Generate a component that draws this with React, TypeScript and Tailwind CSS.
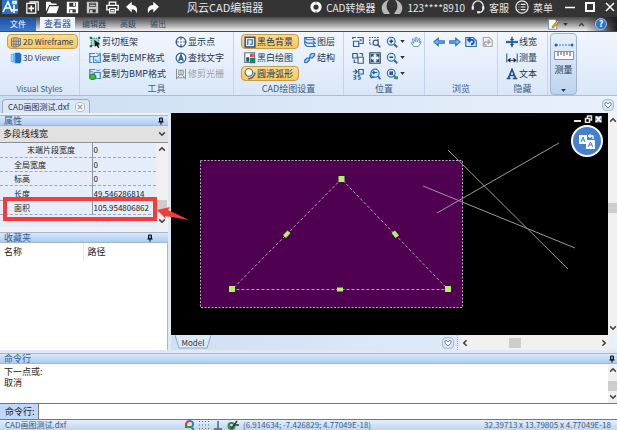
import { ReactNode, useState } from "react";

const SvgIcon = ({
  children,
  size = "w-3 h-3",
}: {
  children: ReactNode;
  size?: string;
}) => (
  <svg
    viewBox="0 0 16 16"
    className={`${size} shrink-0`}
    fill="none"
    stroke="#2f66a8"
    strokeWidth="1.6"
    aria-hidden="true"
  >
    {children}
  </svg>
);

const Caret = ({ color = "#333" }: { color?: string }) => (
  <svg viewBox="0 0 6 4" className="w-[5px] h-[3px] shrink-0" aria-hidden="true">
    <path d="M0 0h6L3 4z" fill={color} />
  </svg>
);

const Chevron = ({ d, size = "w-2 h-2" }: { d: string; size?: string }) => (
  <svg
    viewBox="0 0 10 10"
    className={`${size} shrink-0`}
    fill="none"
    stroke="#444"
    strokeWidth="2"
    aria-hidden="true"
  >
    <path d={d} />
  </svg>
);

const UP = "M1.5 7L5 3.5 8.5 7";
const DOWN = "M1.5 3L5 6.5 8.5 3";
const LEFT = "M7 1.5L3.5 5 7 8.5";
const RIGHT = "M3 1.5L6.5 5 3 8.5";

const Pin = () => (
  <svg viewBox="0 0 8 10" className="w-[6px] h-2 shrink-0" aria-hidden="true">
    <path d="M2 1h4v5H2z" fill="#7c93b5" stroke="#111" strokeWidth="1.3" />
    <path d="M0.5 6.2h7M4 6v4" stroke="#111" strokeWidth="1.4" />
  </svg>
);

const icons = {
  wireframe: (
    <SvgIcon>
      <path
        d="M2 3.5C2 2 11 2 11 3.5v10c0 1.5-9 1.5-9 0zM5 2.5v12M8 2.5v12M2 7h12M2 11h12M11 4l3-1v9l-3 2"
        stroke="#5b7396"
        strokeWidth="1.2"
      />
    </SvgIcon>
  ),
  viewer: (
    <SvgIcon>
      <path d="M1 3l7-2v14l-7-2z" fill="#67b4f2" stroke="none" />
      <path d="M7 1h6l2 2v10l-2 2H7z" fill="#1770cf" stroke="none" />
      <path d="M3 4v8" stroke="#b8e0ff" />
    </SvgIcon>
  ),
  crop: (
    <SvgIcon>
      <path d="M3 3h10v10H3z" fill="#a9d6c9" stroke="#3c8d7c" strokeDasharray="2 1" />
      <path
        d="M1 1h3v3H1zM12 1h3v3h-3zM1 12h3v3H1z"
        fill="#1d5d9c"
        stroke="none"
      />
      <path d="M7 5l8 6-3.5.5L14 15l-2 1-1.5-3.5L8 14z" fill="#111" stroke="none" />
    </SvgIcon>
  ),
  emf: (
    <SvgIcon>
      <path d="M8 2H1v12h3M1 6h4" stroke="#3f86cd" />
      <path d="M6 6h5l4-3v11H6z" fill="#dcecff" stroke="#3f86cd" />
      <path d="M9 1l3 2 3-2M9 9v3h4" stroke="#3f86cd" strokeWidth="1.2" />
    </SvgIcon>
  ),
  bmp: (
    <SvgIcon>
      <path d="M1 8V2h7M1 5h4" stroke="#3f86cd" />
      <path d="M7 6h8v8H7z" fill="#dcecff" stroke="#3f86cd" />
      <path d="M9 2l3 2 3-2" stroke="#3f86cd" strokeWidth="1.2" />
      <path d="M1 9l4-1 4 2v4l-4 2-4-2z" fill="#41b649" stroke="#278c36" />
    </SvgIcon>
  ),
  target: (
    <SvgIcon>
      <circle cx="8" cy="8" r="6.5" fill="#eef6ff" stroke="#34597f" />
      <path d="M8 1v4M8 11v4M1 8h4M11 8h4" stroke="#34597f" />
      <circle cx="8" cy="8" r="1" fill="#34597f" stroke="none" />
    </SvgIcon>
  ),
  findText: (
    <SvgIcon>
      <circle cx="8" cy="8" r="6.5" fill="#fff" stroke="#34597f" />
      <path d="M5 12l3-8 3 8M6 9.5h4" stroke="#1a61b8" strokeWidth="2" />
    </SvgIcon>
  ),
  trim: (
    <SvgIcon>
      <path
        d="M2 1v14M14 1v14M2 13h12M5 3h6v6H5zM3 13l3-3M13 13l-3-3M8 3v6"
        stroke="#8e8e8e"
        strokeWidth="1.3"
      />
    </SvgIcon>
  ),
  blackBg: (
    <SvgIcon>
      <path d="M1.5 1.5h13v13h-13z" fill="#dfebfa" stroke="#2c5279" strokeWidth="2" />
      <path d="M5 12V5h6v6H8" stroke="#42709e" />
    </SvgIcon>
  ),
  monoDraw: (
    <SvgIcon>
      <path d="M1 1h13v13H1z" fill="#fff" stroke="#5c7898" />
      <path d="M3 7h4v6H3z" fill="#33485e" stroke="none" />
      <path d="M8 2h5v5H8z" fill="#e0484a" stroke="none" />
      <path d="M8 8h7v7H8z" fill="#16846f" stroke="none" />
    </SvgIcon>
  ),
  smoothArc: (
    <SvgIcon>
      <circle cx="6.5" cy="6" r="5" fill="#fff" stroke="#42617f" strokeWidth="1.4" />
      <path d="M14.5 6c0 5-4 8.5-9 8.5" stroke="#42617f" strokeWidth="1.8" />
    </SvgIcon>
  ),
  layers: (
    <SvgIcon>
      <path
        d="M1 2h11l3 3H4zM1 6.5l3 3h11l-3-3M1 11l3 3h11l-3-3M1 2v9"
        fill="#e3f0ff"
        stroke="#2d70bd"
      />
    </SvgIcon>
  ),
  structure: (
    <SvgIcon>
      <path d="M4 12l7-8" strokeWidth="2" />
      <path d="M8 4l2-2h4v3l-3 3H8zM1 11l3-3h3v3l-3 3H1z" fill="#a9cff7" stroke="#2b6fc2" />
    </SvgIcon>
  ),
  posA: (
    <SvgIcon>
      <path d="M7 2h8v8h-5M2 7h7v7H2z" fill="#e7f2ff" stroke="#335f93" />
      <path d="M1 4V2h4M10 5h2v2" stroke="#335f93" />
    </SvgIcon>
  ),
  zoomWindow: (
    <SvgIcon>
      <path d="M1 10V2h11v4M1 11h4" strokeDasharray="2 1.5" stroke="#365a80" />
      <circle cx="9" cy="9" r="3.5" fill="#e8f5ff" stroke="#365a80" />
      <path d="M11.5 11.5L15 15" stroke="#365a80" strokeWidth="2.2" />
    </SvgIcon>
  ),
  zoomIn: (
    <SvgIcon>
      <circle cx="7" cy="7" r="5.2" fill="#dff0ff" stroke="#4275ab" />
      <path d="M4.5 7h5M7 4.5v5" stroke="#164c92" strokeWidth="2" />
      <path d="M11 11l4 4" strokeWidth="2.5" />
    </SvgIcon>
  ),
  zoomOut: (
    <SvgIcon>
      <circle cx="7" cy="7" r="5.2" fill="#dff0ff" stroke="#4275ab" />
      <path d="M4.5 7h5" stroke="#164c92" strokeWidth="2" />
      <path d="M11 11l4 4" strokeWidth="2.5" />
    </SvgIcon>
  ),
  zoomAll: (
    <SvgIcon>
      <circle cx="7" cy="7" r="5.2" fill="#dff0ff" stroke="#4275ab" />
      <path d="M4.5 4.5h5v5h-5z" fill="#3c5f86" stroke="none" />
      <path d="M10 10l4 4" strokeWidth="2.5" />
      <path d="M11 11h5v4h-5z" fill="#2fa04a" stroke="none" />
    </SvgIcon>
  ),
  hand: (
    <SvgIcon>
      <path
        d="M5 14L1.5 9 3 8l2 2-2-6 1.5-.5L7 8V2l2-.5L9.5 8 12 3l1.5 1L12 9l2.5-2v2.5L11 14z"
        fill="#fff"
        stroke="#5d93d0"
        strokeWidth="1.3"
      />
    </SvgIcon>
  ),
  posB: (
    <SvgIcon>
      <path d="M1 2h6v6H1zM10 2h4v4M3 10v4h3" fill="#e7f2ff" stroke="#335f93" />
      <path d="M8 7h7v8H8z" fill="#fff" stroke="#335f93" />
    </SvgIcon>
  ),
  fit: (
    <SvgIcon>
      <path d="M1 1h14v14H1z" fill="#e7f2ff" stroke="#2f4d6d" />
      <path
        d="M3 7V3h4M9 3h4v4M13 9v4H9M7 13H3V9M3 3l3 3M13 3l-3 3M13 13l-3-3M3 13l3-3"
        stroke="#2f4d6d"
      />
    </SvgIcon>
  ),
  rotate35: (
    <SvgIcon>
      <path d="M1 5h5M4 2l3 3-3 3M9 2h6v6H9z" stroke="#335f93" />
      <path d="M2 10h3v5H2M2 12.5h3M11 10H8v2h3v3H8" stroke="#1767c5" strokeWidth="1.3" />
    </SvgIcon>
  ),
  zoomPrev: (
    <SvgIcon>
      <circle cx="8" cy="7" r="5.5" fill="#c9e4ff" stroke="#2878cb" />
      <path d="M11 6H5m2-2L5 6l2 2M1 9l2 4 4-1" stroke="#1a5caa" />
      <path d="M12 11l3 4" strokeWidth="2.5" />
    </SvgIcon>
  ),
  back: (
    <SvgIcon>
      <path d="M1 8l6-5v3.5h8v3H7V13z" fill="#7db8f0" stroke="#2f78c8" strokeWidth="1.5" />
    </SvgIcon>
  ),
  forward: (
    <SvgIcon>
      <path d="M15 8L9 3v3.5H1v3h8V13z" fill="#7db8f0" stroke="#2f78c8" strokeWidth="1.5" />
    </SvgIcon>
  ),
  pageBack: (
    <SvgIcon>
      <path d="M1 2h10l4 4v8H1z" fill="#d7eaff" stroke="#356eae" />
      <path d="M4 5h4c6 0 4 6 0 6M7 2L4 5l3 3" stroke="#0e5ac0" strokeWidth="2.4" />
    </SvgIcon>
  ),
  pageForward: (
    <SvgIcon>
      <path d="M3 2h8l4 4v8H3z" fill="#f2f2f2" stroke="#aaa" />
      <path d="M12 8H7c-5 0-3 5 1 4M9 5l3 3-3 3" stroke="#aaa" strokeWidth="1.8" />
    </SvgIcon>
  ),
  lineWidth: (
    <SvgIcon>
      <path d="M0 8h16" stroke="#2465b4" strokeWidth="3" />
      <path d="M8 1v4M8 11v4M6 4l2 2 2-2M6 12l2-2 2 2" stroke="#1c4473" />
    </SvgIcon>
  ),
  measure: (
    <SvgIcon>
      <path d="M1 2v12M15 2v12" stroke="#3a6ea8" />
      <path d="M3 11h10M6 8.5L3 11l3 2.5M10 8.5l3 2.5-3 2.5" stroke="#222" />
    </SvgIcon>
  ),
  text: (
    <SvgIcon>
      <path d="M1 14h5M9 14h6M3 14L8 2l5 12M5 10h6" stroke="#1c4c91" strokeWidth="2.2" />
    </SvgIcon>
  ),
};

type ToolProps = {
  icon: ReactNode;
  label: string;
  active?: boolean;
  disabled?: boolean;
  width?: string;
};

const Tool = ({ icon, label, active, disabled, width = "" }: ToolProps) => (
  <button
    type="button"
    disabled={disabled}
    className={`flex items-center gap-px h-[15px] pl-0.5 pr-1 rounded-sm border whitespace-nowrap ${width} ${
      active
        ? "border-[#c59b4c] bg-linear-to-b from-[#fbdc93] to-[#fbc654]"
        : "border-transparent"
    } ${disabled ? "text-gray-400" : "text-[#24364f]"}`}
  >
    {icon}
    {label}
  </button>
);

const IconTool = ({
  icon,
  label,
  menu,
}: {
  icon: ReactNode;
  label: string;
  menu?: boolean;
}) => (
  <button type="button" aria-label={label} className="flex items-center gap-0.5 h-[15px]">
    {icon}
    {menu && <Caret />}
  </button>
);

const Group = ({
  title,
  width,
  children,
}: {
  title: string;
  width: string;
  children: ReactNode;
}) => (
  <section
    className={`flex flex-col justify-between shrink-0 pt-0.5 border-r border-[#c3d5ea] ${width}`}
  >
    {children}
    <h2 className="text-center leading-3 text-[#3d5a82]">{title}</h2>
  </section>
);

const PanelHeader = ({
  title,
  pinClass = "mr-1",
}: {
  title: string;
  pinClass?: string;
}) => (
  <div className="flex items-center justify-between h-[11px] shrink-0 pl-1 border-y border-[#a5b7cc] bg-linear-to-b from-[#d7e8fb] to-[#abccf3] text-[9px] leading-[9px] text-[#315d9b]">
    <span>{title}</span>
    <button type="button" aria-label={`${title} 固定`} className={pinClass}>
      <Pin />
    </button>
  </div>
);

const quickActions = [
  {
    label: "新建",
    path: (
      <>
        <path d="M1 3h11v12H1zM4 1h11v11" strokeWidth="1.5" />
        <path d="M6.5 5.5v7M3 9h7" strokeWidth="2" />
      </>
    ),
  },
  {
    label: "打开",
    path: <path d="M0 1h5l2 2h6v2H4l-4 8zM4.5 6.5H16L13 15H1z" fill="#fff" stroke="none" />,
  },
  {
    label: "保存",
    path: (
      <path
        fillRule="evenodd"
        d="M1 1h14v14H1zM4 2v5h8V2zM4 10v4h8v-4zM9 2.5h2V6H9zM5 11h3v3H5z"
        fill="#fff"
        stroke="none"
      />
    ),
  },
  {
    label: "另存为",
    path: (
      <path
        fillRule="evenodd"
        d="M1 1h14v14H1zM4 2v5h8V2zM4 10v4h8v-4zM5 3h6v1H5zM5 5h6v1H5zM5 11h3v3H5z"
        fill="#c8c8c8"
        stroke="none"
      />
    ),
  },
  {
    label: "打印",
    path: (
      <>
        <path d="M4 5V1.5h8V5M4 11H1V5.5h14V11h-3" />
        <path d="M4.5 9h7v5.5h-7zM6 12h4" />
      </>
    ),
  },
  {
    label: "撤销",
    path: <path d="M0 7l7-6v4c6 0 8 5 6 10-1-4-3-5-6-5v4z" fill="#fff" stroke="none" />,
  },
  {
    label: "重做",
    path: <path d="M16 7L9 1v4C3 5 1 10 3 15c1-4 3-5 6-5v4z" fill="#fff" stroke="none" />,
  },
];

const TitleBar = () => (
  <header className="flex items-center justify-between h-[17px] shrink-0 pr-0.5 pb-[3px] bg-[#343434] text-[10px] text-gray-200 whitespace-nowrap">
    <div className="flex items-center pl-0.5">
      <svg viewBox="0 0 16 14" className="w-4 h-[14px] mr-2" aria-hidden="true">
        <rect width="16" height="14" fill="#2672c4" />
        <path
          d="M1 12L6 2l4 10M3 8h6M12 5v8M9 10h7M11 1.5h3v2h-3z"
          stroke="#fff"
          strokeWidth="1.6"
          fill="none"
        />
      </svg>
      <div className="flex items-center gap-[7px]">
        {quickActions.map((item) => (
          <button key={item.label} type="button" aria-label={item.label}>
            <svg
              viewBox="0 0 16 16"
              className="w-[13px] h-[13px]"
              fill="none"
              stroke="#fff"
              strokeWidth="1.6"
              aria-hidden="true"
            >
              {item.path}
            </svg>
          </button>
        ))}
      </div>
      <h1 className="ml-7 text-[11px]">风云CAD编辑器</h1>
    </div>
    <div className="flex items-center">
      <button type="button" className="flex items-center gap-1 mr-1.5">
        <svg viewBox="0 0 16 16" className="w-3 h-3" aria-hidden="true">
          <circle cx="8" cy="8" r="5.5" fill="none" stroke="#fff" strokeWidth="4" />
          <path d="M8 0v3M8 13v3" stroke="#343434" />
        </svg>
        CAD转换器
      </button>
      <button type="button" className="flex items-center gap-1 mr-1.5">
        <svg viewBox="0 0 22 14" className="w-[22px] h-[14px]" aria-hidden="true">
          <path
            d="M7 0C0 3-1 9 3 14h6L6 9C5 5 6 2 8 0zM15 0c7 3 8 9 4 14h-6l3-5c1-4 0-7-2-9z"
            fill="#b9b9b9"
          />
        </svg>
        123****8910
      </button>
      <button type="button" className="flex items-center gap-1 mr-1.5">
        <svg
          viewBox="0 0 16 16"
          className="w-[14px] h-[14px]"
          fill="none"
          stroke="#eee"
          strokeWidth="1.5"
          aria-hidden="true"
        >
          <path d="M2 9V7a6 6 0 0112 0v2c0 4-2 5-5 5" />
          <path d="M2 7v4M14 7v4" strokeWidth="2.5" />
          <path d="M7 14h3" strokeWidth="2.5" />
        </svg>
        客服
      </button>
      <button type="button" className="flex items-center gap-1 mr-3">
        <svg
          viewBox="0 0 16 16"
          className="w-[14px] h-[14px]"
          fill="none"
          stroke="#eee"
          strokeWidth="1.4"
          aria-hidden="true"
        >
          <circle cx="8" cy="8" r="7" />
          <path d="M4 5h1M6.5 5H12M4 8h1M6.5 8H12M4 11h1M6.5 11H12" />
        </svg>
        菜单
      </button>
      <div className="flex items-center gap-2.5">
        <button type="button" aria-label="最小化">
          <svg viewBox="0 0 10 10" className="w-2.5 h-2.5" aria-hidden="true">
            <path d="M0 5.5h10" stroke="#fff" strokeWidth="1.5" />
          </svg>
        </button>
        <button type="button" aria-label="最大化">
          <svg viewBox="0 0 10 10" className="w-2.5 h-2.5" aria-hidden="true">
            <path d="M1 1h8v8H1z" fill="none" stroke="#fff" strokeWidth="2" />
          </svg>
        </button>
        <button type="button" aria-label="关闭">
          <svg viewBox="0 0 10 10" className="w-2.5 h-2.5" aria-hidden="true">
            <path d="M1 1l8 8M9 1L1 9" stroke="#fff" strokeWidth="1.5" />
          </svg>
        </button>
      </div>
    </div>
  </header>
);

const tabs = ["查看器", "编辑器", "高级", "输出"];

const TabRow = () => {
  const [tab, setTab] = useState<string>("查看器");

  return (
    <nav className="flex items-stretch h-[15px] shrink-0 bg-linear-to-b from-[#4a4a4a] to-[#f4f4f4] border-b border-[#3e4a66] leading-[14px]">
      <button
        type="button"
        className="w-9 mr-1 bg-linear-to-b from-[#1d4f9c] to-[#3a78cf] text-[8px] text-white"
      >
        文件
      </button>
      {tabs.map((name) => (
        <button
          key={name}
          type="button"
          onClick={() => setTab(name)}
          className={
            tab === name
              ? "px-1 bg-[#eef4fc] text-[9px] text-[#2f4f80]"
              : "px-[7px] text-[8px] text-[#2f486e]"
          }
        >
          {name}
        </button>
      ))}
      <div className="flex items-center gap-1 ml-auto pl-2 pr-px bg-linear-to-r from-transparent from-60% to-[#1c1c1c]">
        <button type="button" aria-label="样式" className="flex items-center gap-1">
          <svg viewBox="0 0 16 16" className="w-3 h-3" aria-hidden="true">
            <path d="M2 2h9l2 3v10H2z" fill="#f3f8ff" stroke="#5e83b0" />
            <path d="M14 3l2 2-6 7-3 1 1-3z" fill="#e6ad35" stroke="#8f6718" />
          </svg>
          <Caret />
        </button>
        <button type="button" aria-label="收起" className="mx-1.5">
          <Chevron d={UP} size="w-[7px] h-[7px]" />
        </button>
        <button type="button" aria-label="帮助" className="flex items-center gap-1">
          <span className="w-3 h-3 rounded-full bg-[#2f74cb] border border-[#9cc5f3] text-white text-[9px] leading-[10px] font-bold">
            ?
          </span>
          <Caret />
        </button>
      </div>
    </nav>
  );
};

const Ribbon = () => (
  <div className="flex h-16 shrink-0 bg-linear-to-b from-[#f1f6fe] to-[#d9e7f7] border-b border-[#a9bfd9] text-[9px] leading-3 overflow-hidden">
    <Group title="Visual Styles" width="w-20 text-[8px]">
      <div className="flex flex-col gap-px pl-[7px]">
        <Tool icon={icons.wireframe} label="2D Wireframe" active width="w-[71px]" />
        <Tool icon={icons.viewer} label="3D Viewer" width="w-[71px]" />
      </div>
    </Group>
    <Group title="工具" width="w-[154px]">
      <div className="flex justify-between pl-1.5 pr-1">
        <div className="flex flex-col items-start gap-px">
          <Tool icon={icons.crop} label="剪切框架" />
          <Tool icon={icons.emf} label="复制为EMF格式" />
          <Tool icon={icons.bmp} label="复制为BMP格式" />
        </div>
        <div className="flex flex-col items-start gap-px">
          <Tool icon={icons.target} label="显示点" />
          <Tool icon={icons.findText} label="查找文字" />
          <Tool icon={icons.trim} label="修剪光栅" disabled />
        </div>
      </div>
    </Group>
    <Group title="CAD绘图设置" width="w-[110px]">
      <div className="flex gap-0.5 pl-[7px]">
        <div className="flex flex-col gap-px">
          <Tool icon={icons.blackBg} label="黑色背景" active width="w-[58px]" />
          <Tool icon={icons.monoDraw} label="黑白绘图" width="w-[58px]" />
          <Tool icon={icons.smoothArc} label="圆滑弧形" active width="w-[58px]" />
        </div>
        <div className="flex flex-col gap-px">
          <Tool icon={icons.layers} label="图层" />
          <Tool icon={icons.structure} label="结构" />
        </div>
      </div>
    </Group>
    <Group title="位置" width="w-[81px]">
      <div className="flex pl-2 gap-[5px]">
        <div className="flex flex-col gap-px">
          <IconTool icon={icons.posA} label="视图" />
          <IconTool icon={icons.posB} label="替换" />
          <IconTool icon={icons.rotate35} label="旋转" />
        </div>
        <div className="flex flex-col gap-px">
          <IconTool icon={icons.zoomWindow} label="窗口缩放" />
          <IconTool icon={icons.fit} label="适应窗口" />
          <IconTool icon={icons.zoomPrev} label="上次缩放" />
        </div>
        <div className="flex flex-col gap-px">
          <IconTool icon={icons.zoomIn} label="放大" menu />
          <IconTool icon={icons.zoomOut} label="缩小" menu />
          <IconTool icon={icons.zoomAll} label="全部缩放" menu />
        </div>
        <div>
          <IconTool icon={icons.hand} label="平移" />
        </div>
      </div>
    </Group>
    <Group title="浏览" width="w-[73px]">
      <div className="flex gap-1 pl-2">
        <IconTool icon={icons.back} label="后退" />
        <IconTool icon={icons.forward} label="前进" />
        <IconTool icon={icons.pageBack} label="上一页" />
        <IconTool icon={icons.pageForward} label="下一页" />
      </div>
    </Group>
    <Group title="隐藏" width="w-[50px]">
      <div className="flex flex-col gap-px pl-[5px]">
        <Tool icon={icons.lineWidth} label="线宽" />
        <Tool icon={icons.measure} label="测量" />
        <Tool icon={icons.text} label="文本" />
      </div>
    </Group>
    <button
      type="button"
      className="flex flex-col items-center w-[27px] shrink-0 ml-0.5 mt-px pb-0.5 rounded-sm border border-[#9db4d2] bg-linear-to-b from-[#e6effa] to-[#bdd3ee] text-[#24364f]"
    >
      <svg viewBox="0 0 22 20" className="w-[22px] h-5 mt-1.5" aria-hidden="true">
        <path d="M3 5h16" stroke="#2d74cf" strokeDasharray="2 1" />
        <circle cx="3" cy="5" r="1.5" fill="#1c62c0" />
        <circle cx="19" cy="5" r="1.5" fill="#1c62c0" />
        <path d="M1.5 11.5h19v8h-19z" fill="#f8f8f8" stroke="#8b929b" />
        <path d="M5 12v4M8 12v3M11 12v4M14 12v3M17 12v4" stroke="#555" />
      </svg>
      <span className="mt-1 mb-auto">测量</span>
      <Caret />
    </button>
  </div>
);

const properties = [
  { name: "末端片段宽度", value: "0", indent: "pl-[27px]" },
  { name: "全局宽度", value: "0", indent: "pl-3.5" },
  { name: "标高", value: "0", indent: "pl-3.5" },
  { name: "长度", value: "49.546286814", indent: "pl-3.5" },
  { name: "面积", value: "105.954806862", indent: "pl-3.5" },
];

const SidePanel = () => (
  <aside className="flex flex-col w-[168px] shrink-0 pt-0.5 bg-[#f0f0f0]">
    <PanelHeader title="属性" />
    <div className="relative h-[17px] shrink-0">
      <select
        aria-label="对象"
        className="appearance-none block w-full h-full pl-[3px] bg-[#e1e1e1] border-b border-[#8e8e8e] text-[9px] text-[#222]"
      >
        <option>多段线线宽</option>
      </select>
      <div className="absolute right-0.5 top-1 pointer-events-none">
        <Chevron d={DOWN} />
      </div>
    </div>
    <div className="relative flex h-[84px] shrink-0 bg-[#e4edf9]">
      <table className="flex-1 h-[72px] table-fixed border-collapse text-[8px] leading-[13px] text-[#222]">
        <tbody>
          {properties.map((item) => (
            <tr key={item.name} className="h-[14px] border-b border-dashed border-[#a0a8b4]">
              <th
                scope="row"
                className={`w-[92px] font-normal text-left whitespace-nowrap border-r border-solid border-r-[#8f99a8] ${item.indent}`}
              >
                {item.name}
              </th>
              <td className="pl-px">{item.value}</td>
            </tr>
          ))}
        </tbody>
      </table>
      <div className="flex flex-col items-center justify-between w-3 shrink-0 py-0.5 bg-[#f0f0f0]">
        <Chevron d={UP} />
        <div className="w-2.5 h-2.5 mt-10 bg-[#cdcdcd]" />
        <Chevron d={DOWN} />
      </div>
      {/* highlight around the area value */}
      <div className="absolute left-[3px] top-[54px] w-[154px] h-6 border-4 border-[#f43c3c]" />
      <svg
        viewBox="0 0 32 14"
        className="absolute left-[157px] top-[64px] w-8 h-3.5 z-10"
        aria-hidden="true"
      >
        <path d="M0 3L13 0l-2 3 21 10-24-4 1 3z" fill="#f43c3c" />
      </svg>
    </div>
    <div className="h-[5px] shrink-0" />
    <PanelHeader title="收藏夹" pinClass="mr-[15px]" />
    <div className="flex-1 bg-white border-r border-[#b5b5b5]">
      <table className="w-full table-fixed text-[9px] leading-[18px] text-[#222]">
        <thead>
          <tr>
            <th className="w-[83px] pl-1 font-normal text-left border-r border-gray-200">
              名称
            </th>
            <th className="pl-1 font-normal text-left">路径</th>
          </tr>
        </thead>
      </table>
    </div>
  </aside>
);

const Drawing = () => (
  <svg
    viewBox="171 113 437 222"
    className="block w-full h-full"
    fill="none"
    role="img"
    aria-label="绘图"
  >
    <rect
      x="200.5"
      y="160.5"
      width="262"
      height="147"
      fill="#500050"
      stroke="#b9a9b9"
      strokeDasharray="2 1.5"
    />
    <path
      d="M341.5 179L232 289.5H448Z"
      stroke="#b8a0b8"
      strokeDasharray="3 2"
    />
    <g stroke="#9b9b9b">
      <path d="M448 150L568 269" />
      <path d="M559 143L437 213" />
      <path d="M423 186L575 248" />
    </g>
    <g fill="#b4f06c">
      <path d="M338.5 176h6v6h-6zM229 286h6v6h-6zM445 286h6v6h-6z" />
      <path d="M337 287.5h6v4h-6z" />
      <path d="M283 235l4.5-4.5 3 2.5-4.5 5zM391.500 233l3.500-2.500 4 5-3.500 2.500z" />
    </g>
  </svg>
);

const Workspace = () => (
  <section className="flex flex-col flex-1 min-w-0 ml-[3px]">
    <div className="flex flex-1 min-h-0">
      <div className="relative flex-1 min-w-0 bg-black">
        <Drawing />
        <div className="absolute right-[5px] top-0.5 flex flex-col items-end gap-0.5">
          <svg
            viewBox="0 0 30 8"
            className="w-[30px] h-2"
            stroke="#e4e4e4"
            fill="none"
            aria-hidden="true"
          >
            <path d="M1 6h7" strokeWidth="2" />
            <path d="M12.5 3.5h4v4h-4zM14.5 3V1h4v4h-2" strokeWidth="1.5" />
            <path d="M22 1h7v6.5h-7z" fill="#7d8794" stroke="none" />
            <path d="M23 1.5l5 5.5M28 1.5l-5 5.5" stroke="#fff" strokeWidth="1.8" />
          </svg>
          <button
            type="button"
            aria-label="翻译"
            className="flex items-center justify-center w-8 h-8 rounded-full border-2 border-white bg-[#4580ce]"
          >
            <svg viewBox="0 0 18 16" className="w-[18px] h-4" aria-hidden="true">
              <path d="M1 2h8v9H1zM8 7h9v9H8z" fill="#fff" />
              <path
                d="M3 9l2-5 2 5M4 7h2M10 14l2.5-5 2.5 5M11 12h3"
                stroke="#4580ce"
                fill="none"
              />
              <path d="M10 3h5v3M12 1v4" stroke="#fff" fill="none" strokeWidth="1.3" />
            </svg>
          </button>
        </div>
      </div>
      <div className="flex flex-col items-center justify-between w-[9px] shrink-0 py-[3px] bg-[#f0f0f0]">
        <Chevron d={UP} />
        <div className="w-full h-2.5 mb-8 bg-[#cdcdcd]" />
        <Chevron d={DOWN} />
      </div>
    </div>
    <div className="flex items-center h-[15px] shrink-0 bg-linear-to-r from-[#cfe0f3] to-[#e7f0fb]">
      <button type="button" className="relative w-9 h-full ml-1 text-[8px] leading-3 text-[#333]">
        <svg viewBox="0 0 36 15" className="absolute inset-0 w-full h-full" aria-hidden="true">
          <path d="M0 0l4 13h28l4-13" fill="#dce9f8" stroke="#8fa8c6" />
        </svg>
        <span className="relative">Model</span>
      </button>
      <button
        type="button"
        aria-label="模型列表"
        className="flex items-center justify-center w-3 h-3 ml-auto mr-[3px] rounded-sm border border-[#a9bfdc] bg-[#d4e3f5]"
      >
        <svg viewBox="0 0 8 8" className="w-2 h-2" aria-hidden="true">
          <path d="M1 2l1.5-.5L4 3l1.5-1.5L7 2v2L4 7 1 4z" fill="#fff" stroke="#8a8a8a" />
        </svg>
      </button>
      <div className="w-px h-full mr-0.5 border-l border-dotted border-[#8fa8c6]" />
      <div className="flex items-center justify-between w-1/3 h-full mr-2 px-px bg-[#f0f0f0]">
        <Chevron d={LEFT} />
        <div className="w-3 h-2.5 mr-10 bg-[#cdcdcd]" />
        <Chevron d={RIGHT} />
      </div>
    </div>
  </section>
);

const CommandPanel = () => {
  const [command, setCommand] = useState<string>("");

  return (
    <section className="flex flex-col shrink-0 pt-[3px] bg-[#e3e8ee]">
      <PanelHeader title="命令行" pinClass="mr-0.5" />
      <div className="flex h-10 bg-white border-b border-[#777]">
        <div className="flex-1 pl-1 pt-0.5 text-[9px] leading-[11px] text-[#222]">
          <p>下一点或:</p>
          <p>取消</p>
        </div>
        <div className="flex flex-col items-center justify-between w-[9px] py-0.5 bg-[#f0f0f0]">
          <Chevron d={UP} />
          <div className="w-full h-2.5 mt-1 bg-[#cdcdcd]" />
          <Chevron d={DOWN} />
        </div>
      </div>
      <div className="flex h-4 bg-white border-b border-[#777]">
        <label
          htmlFor="command"
          className="w-[39px] pl-[5px] border-r border-[#777] bg-[#bdd8f8] text-[9px] leading-[15px] text-[#222]"
        >
          命令行:
        </label>
        <input
          id="command"
          type="text"
          value={command}
          onChange={(e) => setCommand(e.target.value)}
          className="flex-1 px-1 text-[9px] outline-none"
        />
      </div>
    </section>
  );
};

const StatusBar = () => (
  <footer className="flex items-center h-2.5 shrink-0 pl-[5px] pr-1.5 bg-linear-to-b from-[#e4effc] to-[#c0d6f0] text-[8px] leading-[10px] text-[#3c5a85] whitespace-nowrap overflow-hidden">
    <span className="w-[180px] shrink-0">CAD画图测试.dxf</span>
    <div className="flex items-center gap-1">
      <svg viewBox="0 0 10 10" className="w-2.5 h-2.5" fill="none" aria-hidden="true">
        <path d="M1 8V4a4 4 0 014-3" stroke="#d23c3c" strokeWidth="2" />
        <path d="M5 1c3 0 4 3 2 6" stroke="#3577c8" strokeWidth="2" />
        <path d="M1 7h5l3 3" stroke="#2e9a3f" strokeWidth="2" />
      </svg>
      <svg viewBox="0 0 10 10" className="w-2.5 h-2.5" aria-hidden="true">
        <path
          d="M0 1.5h10M0 5h10M0 8.5h10"
          stroke="#667"
          strokeDasharray="1 2"
          strokeWidth="1.2"
        />
      </svg>
      <svg viewBox="0 0 10 10" className="w-2.5 h-2.5" aria-hidden="true">
        <path d="M5 1v8M1 9h8" stroke="#3d66a0" strokeWidth="1.5" />
      </svg>
      <svg viewBox="0 0 12 10" className="w-3 h-2.5" fill="none" aria-hidden="true">
        <circle cx="4.5" cy="6" r="3" stroke="#2e8f4c" strokeWidth="2" />
        <path d="M3 6l2 2 5-7M8 5h4" stroke="#333" strokeWidth="1.4" />
      </svg>
    </div>
    <span className="ml-1">(6.914634; -7.426829; 4.77049E-18)</span>
    <span className="ml-auto">32.39713 x 13.79805 x 4.77049E-18</span>
  </footer>
);

const App = () => {
  return (
    <div className="flex flex-col h-screen overflow-hidden bg-[#dfeaf7] font-['Noto_Sans_CJK_SC',sans-serif]">
      <TitleBar />
      <TabRow />
      <Ribbon />
      <div className="flex items-end justify-between h-[17px] shrink-0 pl-0.5 pr-[3px] bg-linear-to-r from-[#cbddf2] to-[#e9f1fb]">
        <div className="flex items-center gap-1.5 h-3.5 pl-[5px] pr-1 rounded-t border border-b-0 border-[#95aac6] bg-[#dce8f7] text-[8px] leading-3 text-[#24364f]">
          CAD画图测试.dxf
          <button
            type="button"
            aria-label="关闭文件"
            className="flex items-center justify-center w-2.5 h-2.5 rounded-sm border border-[#b3b9c1] bg-white"
          >
            <svg viewBox="0 0 8 8" className="w-[6px] h-[6px]" aria-hidden="true">
              <path d="M1 1l6 6M7 1L1 7" stroke="#999" strokeWidth="1.5" />
            </svg>
          </button>
        </div>
        <button
          type="button"
          aria-label="文件列表"
          className="flex items-center justify-center w-3 h-3 mb-0.5 rounded-sm border border-[#a9bfdc] bg-[#d4e3f5]"
        >
          <svg viewBox="0 0 8 8" className="w-2 h-2" aria-hidden="true">
            <path d="M1 2l1.5-.5L4 3l1.5-1.5L7 2v2L4 7 1 4z" fill="#fff" stroke="#8a8a8a" />
          </svg>
        </button>
      </div>
      <main className="flex flex-1 min-h-0">
        <SidePanel />
        <Workspace />
      </main>
      <CommandPanel />
      <StatusBar />
    </div>
  );
};

export default App;
